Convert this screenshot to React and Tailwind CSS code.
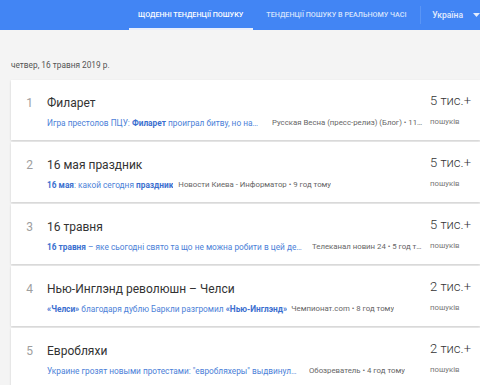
const items = [
  {
    n: 1,
    title: 'Филарет',
    article: [['Игра престолов ПЦУ: ', false], ['Филарет', true], [' проиграл битву, но над...', false]],
    artW: 'max-w-[212px]',
    gap: 'ml-[13px]',
    source: 'Русская Весна (пресс-релиз) (Блог) • 11 годин тому',
    count: '5 тис.+',
  },
  {
    n: 2,
    title: '16 мая праздник',
    article: [['16 мая', true], [': какой сегодня ', false], ['праздник', true]],
    artW: '',
    gap: 'ml-[5px]',
    source: 'Новости Киева - Информатор • 9 год тому',
    count: '5 тис.+',
  },
  {
    n: 3,
    title: '16 травня',
    article: [['16 травня', true], [' – яке сьогодні свято та що не можна робити в цей день', false]],
    artW: 'max-w-[257px]',
    gap: 'ml-[8px]',
    source: 'Телеканал новин 24 • 5 год тому',
    count: '5 тис.+',
  },
  {
    n: 4,
    title: 'Нью-Инглэнд революшн – Челси',
    article: [['«Челси»', true], [' благодаря дублю Баркли разгромил ', false], ['«Нью-Инглэнд»', true]],
    artW: '',
    gap: 'ml-[4px]',
    source: 'Чемпионат.com • 8 год тому',
    count: '2 тис.+',
  },
  {
    n: 5,
    title: 'Евробляхи',
    article: [['Украине грозят новыми протестами: "евробляхеры" выдвинули требования', false]],
    artW: 'max-w-[252px]',
    gap: 'ml-[10px]',
    source: 'Обозреватель • 4 год тому',
    count: '2 тис.+',
  },
]

function TrendCard({ item }) {
  return (
    <div className="h-[60px] mb-[2px] bg-white shadow-[0_1px_2px_rgba(0,0,0,0.16)] flex items-start">
      <div className="w-[22px] shrink-0 pt-[15px] text-[12px] leading-[16px] text-[#9e9e9e] text-right">{item.n}</div>
      <div className="flex-1 min-w-0 pl-[14px] pt-[15px]">
        <div className="text-[12px] leading-[16px] text-[#333]">{item.title}</div>
        <div className="flex items-center mt-[6px] text-[8.3px] leading-[12px] pr-[7px]">
          <span className={`truncate shrink-0 text-[#4c7fd8] ${item.artW}`}>
            {item.article.map(([t, b], i) => (
              <span key={i} className={b ? 'font-bold text-[#3b6fcf]' : ''}>{t}</span>
            ))}
          </span>
          <span className={`truncate min-w-0 text-[#666] text-[7.8px] ${item.gap}`}>{item.source}</span>
        </div>
      </div>
      <div className="w-[50px] shrink-0 pt-[12px] whitespace-nowrap">
        <div className="text-[13px] leading-[18px] font-light text-[#333]">{item.count}</div>
        <div className="text-[7.8px] leading-[11px] text-[#777] mt-[6px]">пошуків</div>
      </div>
    </div>
  )
}

export default function App() {
  return (
    <div className="w-[480px] h-[385px] overflow-hidden bg-[#f4f4f4] font-['Roboto',sans-serif]">
      <header className="h-[30px] bg-[#4285f4] flex items-stretch">
        <div className="w-[129px]" />
        <div className="relative w-[124px] flex items-center justify-center text-[7.2px] font-medium text-white whitespace-nowrap">
          ЩОДЕННІ ТЕНДЕНЦІЇ ПОШУКУ
          <div className="absolute left-0 right-0 bottom-0 h-[2px] bg-[#e8eefc]" />
        </div>
        <div className="w-[168px] flex items-center justify-center text-[7.2px] font-medium text-[#d6e3fd] whitespace-nowrap">
          ТЕНДЕНЦІЇ ПОШУКУ В РЕАЛЬНОМУ ЧАСІ
        </div>
        <div className="w-px my-[6px] bg-[#5a95f5]" />
        <div className="flex items-center pl-[11px] text-[8.5px] font-medium text-[#e4ecfd]">
          Україна
          <svg width="7" height="4" viewBox="0 0 7 4" className="ml-[10px]">
            <path d="M0 0h7L3.5 4z" fill="#e4ecfd" />
          </svg>
        </div>
      </header>
      <div className="pl-[11px]">
        <div className="pt-[29px] pb-[8px] text-[8.3px] leading-[12px] text-[#555]">четвер, 16 травня 2019 р.</div>
        <div className="mt-[1px]">
          {items.map((it) => (
            <TrendCard key={it.n} item={it} />
          ))}
        </div>
      </div>
    </div>
  )
}
